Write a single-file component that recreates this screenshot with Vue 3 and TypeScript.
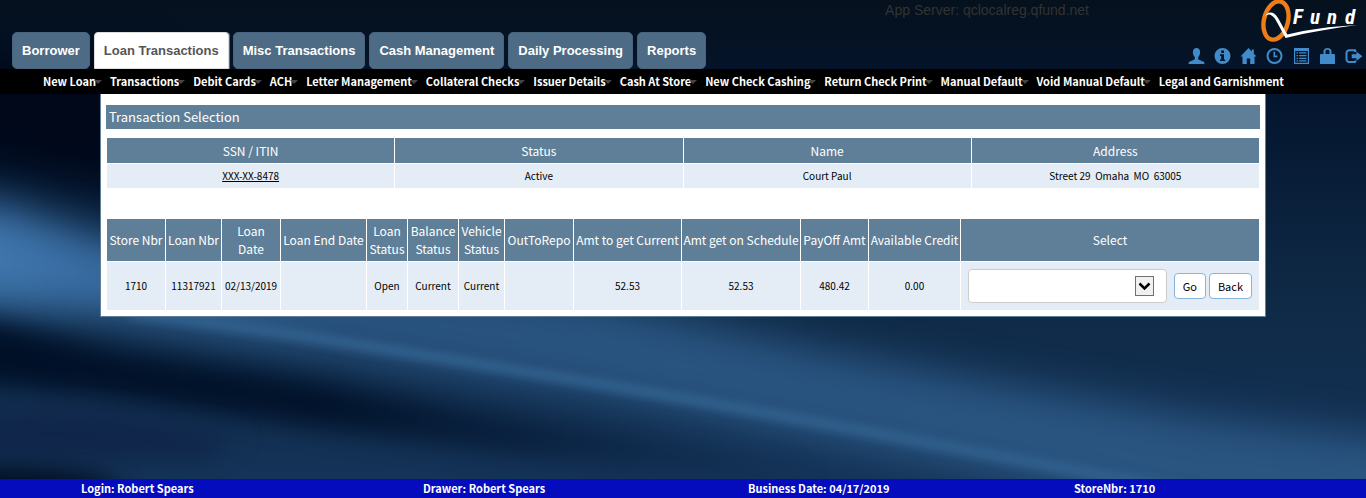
<script setup lang="ts">
import { ref } from 'vue'

const tabs = ['Borrower', 'Loan Transactions', 'Misc Transactions', 'Cash Management', 'Daily Processing', 'Reports']
const activeTab = ref('Loan Transactions')

const menu = [
  'New Loan', 'Transactions', 'Debit Cards', 'ACH', 'Letter Management', 'Collateral Checks', 'Issuer Details',
  'Cash At Store', 'New Check Cashing', 'Return Check Print', 'Manual Default', 'Void Manual Default',
  'Legal and Garnishment',
]

const loanColumns = [
  { label: 'Store Nbr', cls: 'c-store' },
  { label: 'Loan Nbr', cls: 'c-loan' },
  { label: 'Loan Date', cls: 'c-date' },
  { label: 'Loan End Date', cls: 'c-end' },
  { label: 'Loan Status', cls: 'c-status' },
  { label: 'Balance Status', cls: 'c-balance' },
  { label: 'Vehicle Status', cls: 'c-vehicle' },
  { label: 'OutToRepo', cls: 'c-repo' },
  { label: 'Amt to get Current', cls: 'c-current' },
  { label: 'Amt get on Schedule', cls: 'c-schedule' },
  { label: 'PayOff Amt', cls: 'c-payoff' },
  { label: 'Available Credit', cls: 'c-credit' },
  { label: 'Select', cls: 'c-select' },
]
const loan = ['1710', '11317921', '02/13/2019', '', 'Open', 'Current', 'Current', '', '52.53', '52.53', '480.42', '0.00']

const action = ref('')
const footer = ['Login: Robert Spears', 'Drawer: Robert Spears', 'Business Date: 04/17/2019', 'StoreNbr: 1710']
</script>

<template>
  <div class="page">
    <svg class="backdrop" viewBox="0 0 1366 498" preserveAspectRatio="none" aria-hidden="true">
      <defs>
        <linearGradient id="base" x1="0" y1="0" x2="0" y2="1">
          <stop offset="0" stop-color="#05111d" />
          <stop offset="0.2" stop-color="#04152f" />
          <stop offset="0.6" stop-color="#0f2a46" />
          <stop offset="1" stop-color="#15345a" />
        </linearGradient>
        <linearGradient id="band" x1="0" y1="0" x2="1" y2="0">
          <stop offset="0" stop-color="#4480b8" />
          <stop offset="0.12" stop-color="#3a6ea4" />
          <stop offset="0.28" stop-color="#29537f" />
          <stop offset="1" stop-color="#2a5682" />
        </linearGradient>
        <linearGradient id="shade" x1="0" y1="0" x2="1" y2="0">
          <stop offset="0" stop-color="#000f26" />
          <stop offset="0.45" stop-color="#02132b" />
          <stop offset="0.75" stop-color="#0a2240" stop-opacity="0.8" />
          <stop offset="1" stop-color="#14304f" stop-opacity="0.3" />
        </linearGradient>
        <filter id="soft" x="-20%" y="-50%" width="140%" height="200%" color-interpolation-filters="sRGB"><feGaussianBlur stdDeviation="20" /></filter>
        <filter id="mid" x="-20%" y="-50%" width="140%" height="200%" color-interpolation-filters="sRGB"><feGaussianBlur stdDeviation="12" /></filter>
        <filter id="fine" x="-20%" y="-50%" width="140%" height="200%" color-interpolation-filters="sRGB"><feGaussianBlur stdDeviation="4" /></filter>
      </defs>
      <rect width="1366" height="498" fill="url(#base)" />
      <path d="M-80 50 L150 60 L170 200 L-80 150Z" fill="#00081a" filter="url(#soft)" />
      <path d="M-120 195 L0 205 L110 240 L600 300 L820 350 L1000 384 L1200 418 L1480 450 L1480 560 L1160 515 L1000 475 L820 440 L600 396 L300 350 L100 316 L-120 300Z" fill="url(#band)" filter="url(#soft)" />
      <path d="M-80 315 L0 325 L120 352 L300 378 L480 412 L700 450 L820 480 L520 455 L300 425 L100 395 L-80 375Z" fill="url(#shade)" filter="url(#mid)" />
      <path d="M-80 408 L100 412 L240 435 L200 460 L-80 455Z" fill="#10264a" filter="url(#mid)" />
      <ellipse cx="0" cy="490" rx="120" ry="22" fill="#010d20" filter="url(#mid)" />
      <path d="M130 312 C300 333 440 358 600 384 S950 448 1200 493" fill="none" stroke="#31608d" stroke-width="11" filter="url(#fine)" />
    </svg>

    <header class="top">
      <nav class="tabs" aria-label="Sections">
        <button v-for="t in tabs" :key="t" type="button" class="tab" :class="{ active: t === activeTab }" @click="activeTab = t">{{ t }}</button>
      </nav>
      <span class="server">App Server: qclocalreg.qfund.net</span>
      <div class="brand">
        <svg class="logo" viewBox="0 0 104 44" role="img" aria-label="QFund">
          <ellipse cx="18" cy="20.5" rx="12" ry="19.5" transform="rotate(14 18 20.5)" fill="none" stroke="#ee7d16" stroke-width="4.4" />
          <path d="M7 16 C10 11 16 11 20 18 C24 25 27 31 29.500 34.500 C50 29.500 72 26.500 99 25 C76 28 52 32 27.500 38 C25 33 21 26 18 20.500 C15 15 11 13 7 16Z" fill="#fff" />
          <text class="word" y="24" x="35 52 69 87">Fund</text>
        </svg>
        <div class="tools">
          <a href="#" aria-label="Profile"><svg viewBox="0 0 16 16"><path d="M8 0C5.600 0 4.400 1.700 4.400 4.200C4.400 6.200 5.200 8 6.300 9V10.600C6.300 11.400 5.800 11.700 4.900 12.100L1.400 13.600C.500 14 0 14.700 0 16H16C16 14.700 15.500 14 14.600 13.600L11.100 12.100C10.200 11.700 9.700 11.400 9.700 10.600V9C10.800 8 11.600 6.200 11.600 4.200C11.600 1.700 10.400 0 8 0Z" /></svg></a>
          <a href="#" aria-label="Information"><svg viewBox="0 0 16 16"><path fill-rule="evenodd" d="M8 0A8 8 0 1 0 8 16A8 8 0 1 0 8 0ZM6.700 2.500H9.500V5H6.700ZM5.500 6.300H9.500V11.400H10.700V13H5.500V11.400H6.700V7.900H5.500Z" /></svg></a>
          <a href="#" aria-label="Home"><svg viewBox="0 0 16 16"><path d="M8 0L16 8.600H14V16H9.700V10.600H6.300V16H2V8.600H0L8 0Z M11.300 1.500H13.300V5.500H11.300Z" /></svg></a>
          <a href="#" aria-label="History"><svg viewBox="0 0 16 16"><path fill-rule="evenodd" d="M8 0A8 8 0 1 0 8 16A8 8 0 1 0 8 0ZM8 2A6 6 0 1 1 8 14A6 6 0 1 1 8 2ZM7 3.500H8.600V7.600H11V9.200H7Z" /></svg></a>
          <a href="#" aria-label="List"><svg viewBox="0 0 16 16"><path fill-rule="evenodd" d="M.500 0H15.500V16H.500ZM1.700 3V14.800H14.300V3ZM3 4.300H4.600V5.600H3ZM5.600 4.300H13V5.600H5.600ZM3 7H4.600V8.300H3ZM5.600 7H13V8.300H5.600ZM3 9.700H4.600V11H3ZM5.600 9.700H13V11H5.600ZM3 12.300H4.600V13.600H3ZM5.600 12.300H13V13.600H5.600Z" /></svg></a>
          <a href="#" aria-label="Lock"><svg viewBox="0 0 16 16"><path fill-rule="evenodd" d="M4 6V3.500C4 1.200 5.500 0 8 0S12 1.200 12 3.500V6H14.500Q15.500 6 15.500 7V16H.500V7Q.500 6 1.500 6ZM6 6H10V3.500C10 2.300 9.200 1.800 8 1.800S6 2.300 6 3.500Z" /></svg></a>
          <a href="#" aria-label="Log out"><svg viewBox="0 0 16 16"><path d="M9.500 1.200H4C1.600 1.200 0 2.800 0 5V11.200C0 13.400 1.600 15 4 15H9.500Q10.800 15 10.800 13.700V12.500H8.800V13H4C2.800 13 2 12.300 2 11.200V5C2 3.900 2.800 3.200 4 3.200H8.800V4H10.800V2.500Q10.800 1.200 9.500 1.200Z M11 3.700L17 8.300L11 12.700V10.200H6.200V6.300H11Z" /></svg></a>
        </div>
      </div>
    </header>

    <nav class="menu" aria-label="Loan transactions">
      <a v-for="m in menu" :key="m" href="#">{{ m }}</a>
    </nav>

    <main class="panel">
      <h1>Transaction Selection</h1>
      <table class="customer">
        <thead>
          <tr><th>SSN / ITIN</th><th>Status</th><th>Name</th><th>Address</th></tr>
        </thead>
        <tbody>
          <tr>
            <td><a href="#">XXX-XX-8478</a></td>
            <td>Active</td>
            <td>Court Paul</td>
            <td>Street 29&nbsp; Omaha&nbsp; MO&nbsp; 63005</td>
          </tr>
        </tbody>
      </table>
      <table class="loans">
        <colgroup><col v-for="c in loanColumns" :key="c.cls" :class="c.cls" /></colgroup>
        <thead>
          <tr><th v-for="c in loanColumns" :key="c.cls" :class="{ narrow: c.cls === 'c-date' }">{{ c.label }}</th></tr>
        </thead>
        <tbody>
          <tr>
            <td v-for="(v, i) in loan" :key="i">{{ v }}</td>
            <td>
              <div class="actions">
                <div class="picker">
                  <select v-model="action" aria-label="Select">
                    <option value=""></option>
                  </select>
                  <span class="arrow"><svg viewBox="0 0 13 9"><path d="M1.500 1.500L6.500 6.500L11.500 1.500" fill="none" stroke="#000" stroke-width="2.500" /></svg></span>
                </div>
                <button type="button" class="go">Go</button>
                <button type="button">Back</button>
              </div>
            </td>
          </tr>
        </tbody>
      </table>
    </main>

    <footer class="status">
      <span v-for="f in footer" :key="f">{{ f }}</span>
    </footer>
  </div>
</template>

<style>
body {
  margin: 0;
  background: #05111d;
}
</style>

<style scoped>
.page {
  position: relative;
  isolation: isolate;
  display: flex;
  flex-direction: column;
  min-height: 100vh;
  overflow: hidden;
  font-family: "Noto Sans CJK SC", "Open Sans", sans-serif;
  font-size: 12px;
  color: #000;
}
.backdrop {
  position: absolute;
  inset: 0;
  z-index: -1;
  width: 100%;
  height: 100%;
}
.top {
  display: flex;
  height: 69px;
  padding: 0 4px 0 12px;
  font-family: "Liberation Sans", Arial, sans-serif;
}
.tabs {
  display: flex;
  align-self: flex-end;
  gap: 4px;
}
.tab {
  height: 37px;
  padding: 0 9px;
  border: 1px solid #48657f;
  border-radius: 5px;
  background: #4d6b84;
  color: #fff;
  font: bold 13px/18px "Liberation Sans", Arial, sans-serif;
  white-space: nowrap;
}
.tab.active {
  border-color: #ddd;
  border-radius: 4px 4px 0 0;
  background: #fff;
  color: #555;
  box-shadow: 1px 0 #4d6b84;
}
.server {
  margin: 2px 99px 0 auto;
  color: #333;
  font-size: 14px;
  line-height: 16px;
  white-space: nowrap;
}
.brand {
  display: flex;
  flex-direction: column;
  align-items: flex-end;
  gap: 4px;
  width: 174px;
}
.logo {
  width: 104px;
  height: 44px;
}
.word {
  fill: #fff;
  font: italic bold 21px "Roboto Condensed", Roboto, sans-serif;
}
.tools {
  display: flex;
  justify-content: space-between;
  width: 100%;
}
.tools a,
.tools svg {
  display: block;
  width: 17px;
  height: 16px;
  overflow: visible;
  fill: #428bca;
}
.menu {
  display: flex;
  justify-content: space-between;
  height: 25px;
  padding: 0 82px 0 43px;
  background: #000;
  font-size: 11px;
  font-weight: bold;
  line-height: 25px;
}
.menu a {
  position: relative;
  color: #fff;
  text-decoration: none;
  white-space: nowrap;
}
.menu a:not(:last-child)::after {
  content: "";
  position: absolute;
  top: 11px;
  right: -6px;
  border: 4px solid transparent;
  border-top-color: #444;
  border-bottom: 0;
}
.panel {
  margin: 0 100px;
  padding: 11px 5px 5px;
  border: 1px solid #5f7f98;
  border-top: 0;
  background: #fff;
}
h1 {
  margin: 0 0 8px;
  padding: 0 3px;
  background: #5f7f98;
  color: #fff;
  font-size: 13px;
  font-weight: normal;
  line-height: 24px;
}
table {
  width: 100%;
  border-spacing: 1px;
  table-layout: fixed;
}
th,
td {
  padding: 0;
  text-align: center;
}
th {
  background: #5f7f98;
  color: #fff;
  font-size: 12px;
  font-weight: normal;
  line-height: 18px;
}
td {
  background: #e4edf5;
  font-size: 10px;
  line-height: 16px;
}
.customer th {
  height: 25px;
}
.customer td {
  height: 24px;
}
.customer a {
  color: #000;
}
.loans {
  margin-top: 29px;
}
.loans th {
  height: 42px;
}
.loans th.narrow {
  padding: 0 8px;
}
.loans td {
  height: 48px;
}
.c-store { width: 58px; }
.c-loan { width: 55px; }
.c-date { width: 58px; }
.c-end { width: 85px; }
.c-status { width: 40px; }
.c-balance { width: 50px; }
.c-vehicle { width: 45px; }
.c-repo { width: 68px; }
.c-current { width: 107px; }
.c-schedule { width: 118px; }
.c-payoff { width: 67px; }
.c-credit { width: 91px; }
.actions {
  display: flex;
  align-items: center;
  gap: 3px;
  padding: 0 7px;
}
.picker {
  position: relative;
  flex: 1;
}
select {
  display: block;
  width: 100%;
  height: 34px;
  padding: 0 32px 0 12px;
  border: 1px solid #ccc;
  border-radius: 4px;
  appearance: none;
  background: #fff;
  font: inherit;
}
.arrow {
  position: absolute;
  top: 7px;
  right: 13px;
  display: grid;
  place-items: center;
  box-sizing: border-box;
  width: 19px;
  height: 20px;
  border: 1px solid #707070;
  background: #f0f0f0;
  pointer-events: none;
}
.arrow svg {
  width: 13px;
  height: 9px;
}
.actions button {
  height: 26px;
  padding: 0 8px;
  border: 1px solid #85b4dd;
  border-radius: 4px;
  background: #fff;
  color: #000;
  font: 11px/16px "Noto Sans CJK SC", "Open Sans", sans-serif;
}
.actions .go {
  margin-left: 4px;
}
.status {
  display: grid;
  grid-template-columns: 342fr 325fr 326fr 292fr;
  margin-top: auto;
  padding-left: 81px;
  background: #040cbe;
  color: #fff;
  font-size: 11px;
  font-weight: bold;
  line-height: 19px;
}
</style>
